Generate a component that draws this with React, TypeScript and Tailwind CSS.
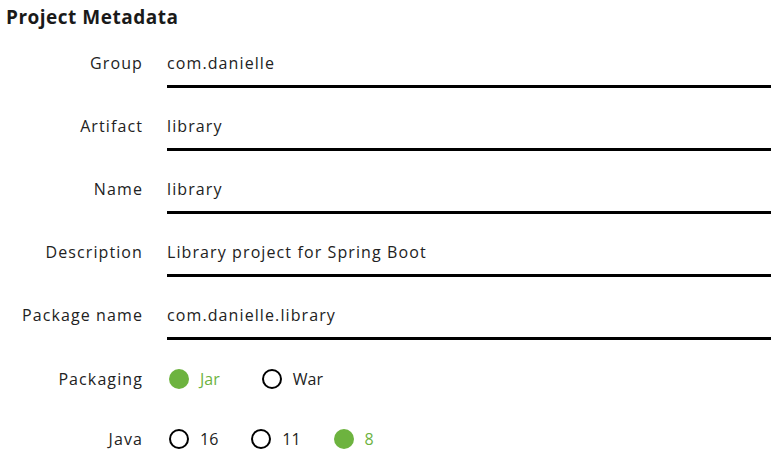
import React from "react";

const fields = [
  { label: "Group", value: "com.danielle" },
  { label: "Artifact", value: "library" },
  { label: "Name", value: "library" },
  { label: "Description", value: "Library project for Spring Boot" },
  { label: "Package name", value: "com.danielle.library" },
];

function Radio({ label, checked }: { label: string; checked?: boolean }) {
  return (
    <div className="flex items-center gap-[11px]">
      {checked ? (
        <span className="w-[20px] h-[20px] rounded-full bg-[#6db33f]" />
      ) : (
        <span className="w-[20px] h-[20px] rounded-full border-2 border-black" />
      )}
      <span className={`tracking-normal ${checked ? "text-[#6db33f]" : "text-[#222]"}`}>{label}</span>
    </div>
  );
}

export default function App() {
  return (
    <div
      className="w-[776px] h-[458px] bg-white text-[16px] tracking-[1.1px] text-[#222] overflow-hidden"
      style={{ fontFamily: '"Open Sans", sans-serif' }}
    >
      <h1 className="pl-[6px] pt-[5px] text-[19px] leading-6 font-bold tracking-[0.5px] text-[#1a1a1a]">
        Project Metadata
      </h1>
      <div className="mt-[17px] flex flex-col gap-[21px]">
        {fields.map((f) => (
          <div key={f.label} className="flex items-start gap-[24px]">
            <div className="w-[143px] text-right pt-[5px] leading-6 whitespace-nowrap">{f.label}</div>
            <div className="w-[604px] h-[42px] border-b-[3px] border-black pt-[5px] leading-6">
              {f.value}
            </div>
          </div>
        ))}
      </div>
      <div className="mt-[27px] flex items-center gap-[24px] h-[24px]">
        <div className="w-[143px] text-right leading-6">Packaging</div>
        <div className="flex items-center gap-[42px] pl-[2px]">
          <Radio label="Jar" checked />
          <Radio label="War" />
        </div>
      </div>
      <div className="mt-[36px] flex items-center gap-[24px] h-[24px]">
        <div className="w-[143px] text-right leading-6">Java</div>
        <div className="flex items-center gap-[33px] pl-[2px]">
          <Radio label="16" />
          <Radio label="11" />
          <Radio label="8" checked />
        </div>
      </div>
    </div>
  );
}
